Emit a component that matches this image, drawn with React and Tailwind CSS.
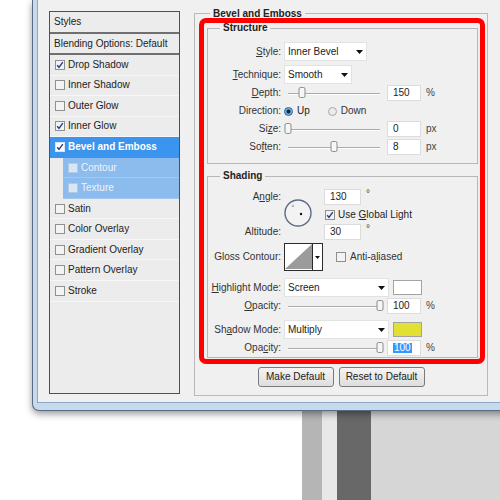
import React from "react";

const styleRows = [
  { label: "Drop Shadow", checked: true },
  { label: "Inner Shadow" },
  { label: "Outer Glow" },
  { label: "Inner Glow", checked: true },
  { label: "Bevel and Emboss", checked: true, active: true },
  { label: "Contour", sub: true },
  { label: "Texture", sub: true },
  { label: "Satin" },
  { label: "Color Overlay" },
  { label: "Gradient Overlay" },
  { label: "Pattern Overlay" },
  { label: "Stroke" },
];

function Checkbox({ checked, variant }) {
  let box = "border-[#8e8f8f] bg-[#f3f3f3]";
  if (variant === "sub") box = "border-[#b3c8e2] bg-[#dbe6f3]";
  if (variant === "active") box = "border-[#d8e4f3] bg-white";
  return (
    <span className={`flex h-[10px] w-[10px] shrink-0 items-center justify-center border ${box}`}>
      {checked && (
        <svg width="8" height="8" viewBox="0 0 8 8">
          <path d="M1.2 4.2 L3 6.4 L6.8 1.2" fill="none" stroke="#263b86" strokeWidth="1.4" />
        </svg>
      )}
    </span>
  );
}

function StyleRow({ row }) {
  if (row.sub) {
    return (
      <div className="flex h-[20.55px] pl-[13px]">
        <div className="flex flex-1 items-center gap-[3px] border-b border-[#a3c7ef] bg-[#8cbbed] pl-[5px] text-[#edf4fd]">
          <Checkbox variant="sub" />
          <span>{row.label}</span>
        </div>
      </div>
    );
  }
  if (row.active) {
    return (
      <div className="flex h-[20.55px] items-center gap-[3px] bg-[#3b94ee] pl-[5px] font-bold text-white">
        <Checkbox checked variant="active" />
        <span>{row.label}</span>
      </div>
    );
  }
  return (
    <div className="flex h-[20.55px] items-center gap-[3px] border-b border-[#f7f7f7] pl-[5px] text-[#222]">
      <Checkbox checked={row.checked} />
      <span>{row.label}</span>
    </div>
  );
}

function Label({ children }) {
  return <span className="w-[73px] shrink-0 text-right text-[#333]">{children}</span>;
}

function Arrow() {
  return (
    <svg width="7" height="4" viewBox="0 0 7 4" className="shrink-0">
      <path d="M0 0 H7 L3.5 4 Z" fill="#111" />
    </svg>
  );
}

function Dropdown({ value, className }) {
  return (
    <div className={`ml-[3px] flex h-[19px] items-center justify-between border border-[#e2e2e2] bg-white pl-[3px] pr-[3px] text-[#222] ${className}`}>
      <span>{value}</span>
      <Arrow />
    </div>
  );
}

function Slider({ pct }) {
  return (
    <div className="relative mx-[7px] h-[12px] w-[92px] shrink-0">
      <div className="mt-[6px] h-[2px] border-t border-[#ababab] border-b border-b-white" />
      <span
        className="absolute top-0 h-[11px] w-[7px] -translate-x-1/2 rounded-[2px] border border-[#8c8c8c] bg-[#f6f6f6]"
        style={{ left: `${pct}%` }}
      />
    </div>
  );
}

function NumBox({ children, className = "w-[34px]" }) {
  return (
    <span className={`flex h-[16px] shrink-0 items-center border border-[#dcdcdc] bg-white pl-[5px] text-[#222] ${className}`}>
      {children}
    </span>
  );
}

function SliderRow({ label, pct, value, unit, className }) {
  return (
    <div className={`flex items-center ${className}`}>
      <Label>{label}</Label>
      <Slider pct={pct} />
      <NumBox>{value}</NumBox>
      <span className="ml-[5px] text-[#444]">{unit}</span>
    </div>
  );
}

export default function App() {
  return (
    <div className="flex h-[500px] w-[500px] flex-col overflow-hidden bg-white font-['Liberation_Sans',Arial,sans-serif] text-[10px] leading-none">
      {/* window */}
      <div className="relative z-10 ml-[32px] w-[490px] shrink-0 rounded-bl-[7px] border-b border-l border-[#5b6c82] bg-[#c5d9ef] pb-[7px] pl-[4px] shadow-[0_3px_7px_rgba(0,0,0,0.4)]">
        <div className="flex h-[403px] border-b border-l border-[#8ea7c4] bg-[#f0f0f0] pl-[11px] pt-[11px]">
          {/* styles list */}
          <div className="flex h-[383px] w-[131px] shrink-0 flex-col border border-[#505050] bg-[#ececec]">
            <div className="flex h-[22px] items-center border-b-2 border-[#6f6f6f] pl-[4px] text-[#222]">Styles</div>
            <div className="flex h-[21px] items-center border-b-2 border-[#6f6f6f] pl-[4px] text-[#222]">Blending Options: Default</div>
            {styleRows.map((row) => (
              <StyleRow key={row.label} row={row} />
            ))}
          </div>

          {/* bevel and emboss */}
          <fieldset className="-mt-[4px] ml-[14px] h-[389px] w-[294px] shrink-0 border border-[#b9b9b9]">
            <legend className="ml-[15px] px-[3px] font-bold leading-[13px] text-[#222]">Bevel and Emboss</legend>

            <div className="-mt-[2px] ml-[4px] h-[346px] w-[286px] rounded-[7px] border-[5px] border-[#ff0000]">
              {/* structure */}
              <fieldset className="-mt-px ml-[3px] h-[142px] w-[271px] border border-[#b7b7b7]">
                <legend className="ml-[12px] px-[3px] font-bold leading-[12px] text-[#222]">Structure</legend>
                <div className="mt-[8px] flex h-[19px] items-center">
                  <Label><u>S</u>tyle:</Label>
                  <Dropdown value="Inner Bevel" className="w-[83px]" />
                </div>
                <div className="mt-[4px] flex h-[19px] items-center">
                  <Label><u>T</u>echnique:</Label>
                  <Dropdown value="Smooth" className="w-[68px]" />
                </div>
                <SliderRow label={<><u>D</u>epth:</>} pct={15} value="150" unit="%" className="h-[18px]" />
                <div className="flex h-[18px] items-center">
                  <Label>Direction:</Label>
                  <span className="ml-[3px] h-[9px] w-[9px] rounded-full border border-[#2d5b8b] bg-[radial-gradient(circle,#15263d_32%,#5a9ad6_45%,#cfe3f6_100%)]" />
                  <span className="ml-[4px] text-[#222]">Up</span>
                  <span className="ml-[18px] h-[9px] w-[9px] rounded-full border border-[#a8a8a8] bg-[#ececec]" />
                  <span className="ml-[4px] text-[#333]">Down</span>
                </div>
                <SliderRow label={<>Si<u>z</u>e:</>} pct={0} value="0" unit="px" className="h-[18px]" />
                <SliderRow label={<>So<u>f</u>ten:</>} pct={50} value="8" unit="px" className="h-[18px]" />
              </fieldset>

              {/* shading */}
              <fieldset className="ml-[3px] mt-[6px] h-[188px] w-[271px] border border-[#b7b7b7]">
                <legend className="ml-[12px] px-[3px] font-bold leading-[12px] text-[#222]">Shading</legend>
                <div className="mt-[7px] flex">
                  <div className="flex h-[51px] w-[73px] shrink-0 flex-col justify-between text-right text-[#333]">
                    <span className="leading-[16px]">A<u>n</u>gle:</span>
                    <span className="leading-[16px]">Altitude:</span>
                  </div>
                  <svg width="28" height="28" viewBox="0 0 28 28" className="ml-[3px] mt-[10px] shrink-0">
                    <circle cx="14" cy="14" r="13" fill="#f3f3f3" stroke="#5c6c86" strokeWidth="1.4" />
                    <circle cx="17" cy="15" r="1.2" fill="#111" />
                    <path d="M9 5.5 V8.5 M7.5 7 H10.5" stroke="#888" strokeWidth="0.8" strokeDasharray="1 0.6" />
                  </svg>
                  <div className="ml-[12px] flex flex-col">
                    <div className="flex h-[16px] items-center">
                      <NumBox className="w-[37px]">130</NumBox>
                      <span className="ml-[5px] self-start text-[#444]">°</span>
                    </div>
                    <div className="flex h-[19px] items-center gap-[3px] pl-px text-[#222]">
                      <Checkbox checked />
                      <span>Use <u>G</u>lobal Light</span>
                    </div>
                    <div className="flex h-[16px] items-center">
                      <NumBox className="w-[37px]">30</NumBox>
                      <span className="ml-[5px] self-start text-[#444]">°</span>
                    </div>
                  </div>
                </div>

                <div className="mt-[3px] flex h-[28px] items-center">
                  <Label>Gloss Contour:</Label>
                  <div className="ml-[3px] flex h-[28px] w-[39px] border-[1.5px] border-[#2b2b2b] bg-white">
                    <svg width="27" height="25" viewBox="0 0 27 25" className="shrink-0">
                      <polygon points="0,25 27,0 27,25" fill="#9b9b9b" />
                    </svg>
                    <div className="flex flex-1 items-center justify-center border-l border-[#2b2b2b]">
                      <svg width="5" height="3" viewBox="0 0 5 3">
                        <path d="M0 0 H5 L2.5 3 Z" fill="#111" />
                      </svg>
                    </div>
                  </div>
                  <span className="ml-[13px]"><Checkbox /></span>
                  <span className="ml-[4px] text-[#333]">Anti-a<u>l</u>iased</span>
                </div>

                <div className="mt-[7px] flex h-[19px] items-center">
                  <Label><u>H</u>ighlight Mode:</Label>
                  <Dropdown value="Screen" className="w-[105px]" />
                  <span className="ml-[4px] h-[15px] w-[29px] border border-[#a3a3a3] bg-white" />
                </div>
                <SliderRow label={<><u>O</u>pacity:</>} pct={100} value="100" unit="%" className="h-[18px]" />
                <div className="mt-[5px] flex h-[19px] items-center">
                  <Label>Sh<u>a</u>dow Mode:</Label>
                  <Dropdown value="Multiply" className="w-[105px]" />
                  <span className="ml-[4px] h-[15px] w-[29px] border border-[#a3a3a3] bg-[#e3e034]" />
                </div>
                <SliderRow
                  label={<>Opa<u>c</u>ity:</>}
                  pct={100}
                  value={<span className="bg-[#3399ff] px-px text-white">100</span>}
                  unit="%"
                  className="h-[17px]"
                />
              </fieldset>
            </div>

            <div className="mt-[3px] flex justify-center gap-[5px]">
              <button className="flex h-[20px] w-[76px] items-center justify-center rounded-[3px] border border-[#7a7a7a] bg-[linear-gradient(#f4f4f4,#dedede)] text-[#222]">
                Make Default
              </button>
              <button className="flex h-[20px] w-[86px] items-center justify-center rounded-[3px] border border-[#7a7a7a] bg-[linear-gradient(#f4f4f4,#dedede)] text-[#222]">
                Reset to Default
              </button>
            </div>
          </fieldset>
        </div>
      </div>

      {/* backdrop below the window */}
      <div className="flex flex-1">
        <div className="w-[302px] bg-white" />
        <div className="w-[20px] bg-[#b5b5b5]" />
        <div className="w-[15px] bg-[#e8e8e8]" />
        <div className="w-[34px] bg-[#686868]" />
        <div className="flex-1 bg-[#d6d6d6]" />
      </div>
    </div>
  );
}
